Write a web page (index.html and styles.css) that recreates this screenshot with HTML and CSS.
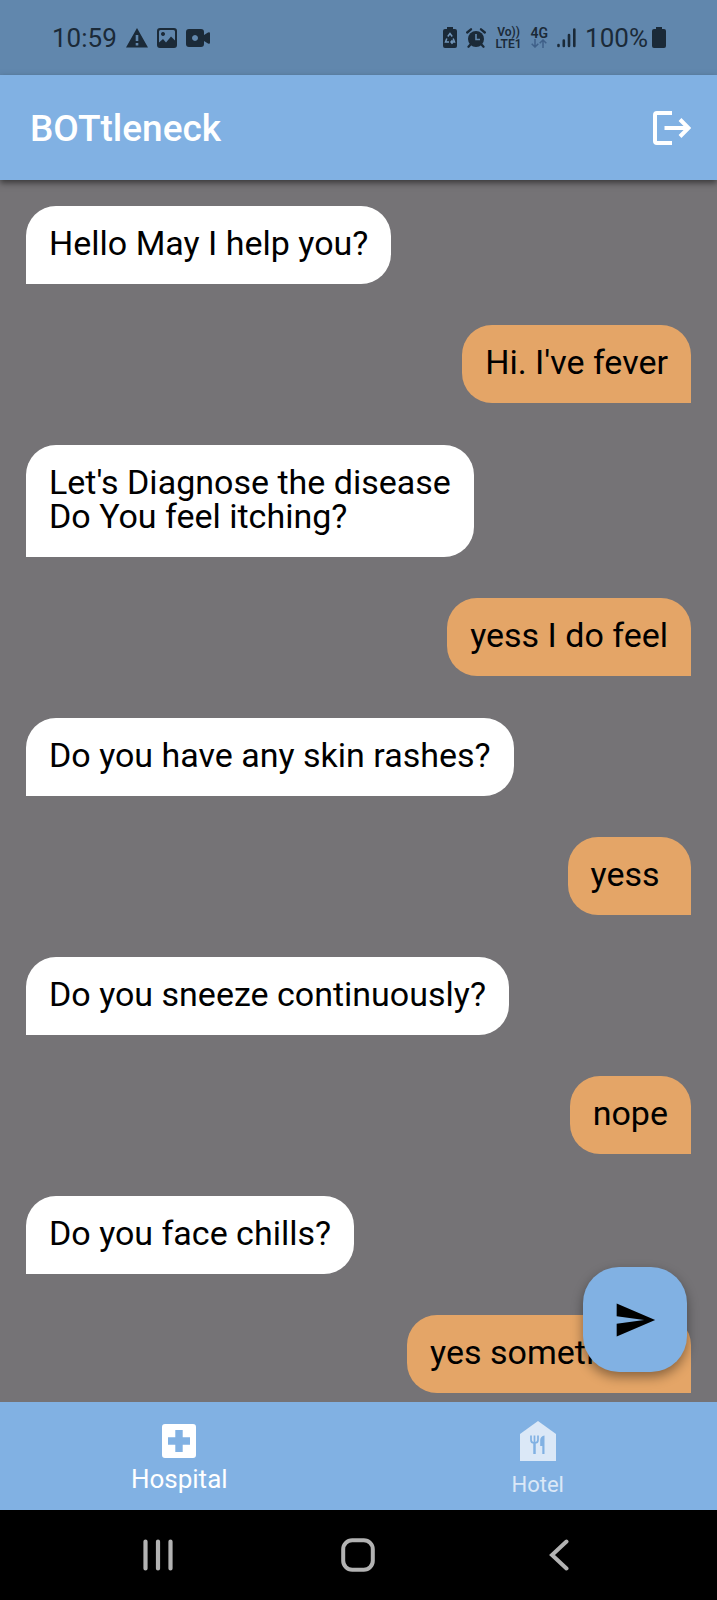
FILE: index.html
```html
<!DOCTYPE html>
<html lang="en">
<head>
<meta charset="utf-8">
<meta name="viewport" content="width=device-width, initial-scale=1">
<title>BOTtleneck</title>
<link rel="stylesheet" href="styles.css">
</head>
<body>
<div class="app">
  <div class="status">
    <div class="status-group status-left">
      <span class="clock">10:59</span>
      <svg width="22" height="20" viewBox="0 0 22 20"><path fill="currentColor" fill-rule="evenodd" d="M11 0 22 19.500H0ZM9.700 7v6h2.600V7Zm0 8v2.500h2.600V15Z"/></svg>
      <svg width="20" height="20" viewBox="0 0 20 20"><path fill="currentColor" fill-rule="evenodd" d="M3 0H17a3 3 0 0 1 3 3V17a3 3 0 0 1-3 3H3a3 3 0 0 1-3-3V3a3 3 0 0 1 3-3ZM2 14.500 6 11l3 3.500 5-6 4 4V3.500Q18 2 16.500 2H3.500Q2 2 2 3.500ZM6 4a2 2 0 1 0 .01 0Z"/></svg>
      <svg width="24" height="20" viewBox="0 0 24 20"><path fill="currentColor" fill-rule="evenodd" d="M3 1H15a3 3 0 0 1 3 3V7L22 4.500Q24 3.500 24 5.500V14.500Q24 16.500 22 15.500L18 13V16a3 3 0 0 1-3 3H3a3 3 0 0 1-3-3V4a3 3 0 0 1 3-3ZM9 7a3 3 0 1 0 .01 0Z"/></svg>
    </div>
    <div class="status-group status-right">
      <svg width="14" height="21" viewBox="0 0 14 21"><path fill="currentColor" d="M4 0H10V2H12a2 2 0 0 1 2 2V19a2 2 0 0 1-2 2H2a2 2 0 0 1-2-2V4a2 2 0 0 1 2-2H4Z"/><path fill="none" stroke="#7296ba" stroke-width="1.500" d="M4.800 9.500 7 6.500 9.200 9.500M3.800 11.500 2.500 15H6M8 15H11.500L10.200 11.500M9.500 13.200 8 15 9.500 16.800"/></svg>
      <svg width="20" height="20" viewBox="0 0 20 20"><circle cx="10" cy="11" r="8" fill="currentColor"/><path fill="none" stroke="currentColor" stroke-width="2.300" stroke-linecap="round" d="M1.200 4.500 5 1.300M18.800 4.500 15 1.300M4.500 16.500 2.500 18.700M15.500 16.500 17.500 18.700"/><path fill="none" stroke="#6187ad" stroke-width="1.600" d="M10 6V11.500H14"/></svg>
      <span class="volte"><span>Vo))</span><span>LTE1</span></span>
      <span class="net"><span>4G</span><svg width="16" height="9" viewBox="0 0 16 9"><path fill="none" stroke="#3f6089" stroke-width="1.500" d="M4 0V8M.7 4.700 4 8 7.300 4.700M12 9V1M8.700 4.300 12 1 15.300 4.300"/></svg></span>
      <svg width="19" height="20" viewBox="0 0 19 20"><path fill="none" stroke="currentColor" stroke-width="2.600" stroke-linecap="round" d="M1.500 17V18M6.800 12.500V18M12 7V18M17.300 1.500V18"/></svg>
      <span class="charge"><span>100%</span>
      <svg width="14" height="21" viewBox="0 0 14 21"><path fill="currentColor" d="M4 0H10V2H12a2 2 0 0 1 2 2V19a2 2 0 0 1-2 2H2a2 2 0 0 1-2-2V4a2 2 0 0 1 2-2H4Z"/></svg></span>
    </div>
  </div>

  <header class="appbar">
    <h1 class="title">BOTtleneck</h1>
    <button class="logout" type="button" aria-label="Log out">
      <svg width="38" height="34" viewBox="0 0 38 34"><path fill="none" stroke="#fff" stroke-width="4" stroke-linejoin="round" d="M19 2H4Q2 2 2 4V30Q2 32 4 32H19"/><path fill="none" stroke="#fff" stroke-width="4" d="M11.500 17H35M27 8.500 35.500 17 27 25.500"/></svg>
    </button>
  </header>

  <main class="chat">
    <ul class="messages">
      <li class="msg bot">Hello May I help you?</li>
      <li class="msg user">Hi. I've fever</li>
      <li class="msg bot">Let's Diagnose the disease
Do You feel itching?</li>
      <li class="msg user">yess I do feel</li>
      <li class="msg bot">Do you have any skin rashes?</li>
      <li class="msg user">yess </li>
      <li class="msg bot">Do you sneeze continuously?</li>
      <li class="msg user">nope</li>
      <li class="msg bot">Do you face chills?</li>
      <li class="msg user">yes sometimes </li>
    </ul>
    <button class="send" type="button" aria-label="Send">
      <svg width="44" height="44" viewBox="0 0 24 24"><path d="M2.010 21 23 12 2.010 3 2 10l15 2-15 2z"/></svg>
    </button>
  </main>

  <nav class="tabs">
    <a class="tab active" href="#hospital">
      <svg width="34" height="34" viewBox="0 0 34 34"><path fill="currentColor" fill-rule="evenodd" d="M3 0H31a3 3 0 0 1 3 3V31a3 3 0 0 1-3 3H3a3 3 0 0 1-3-3V3a3 3 0 0 1 3-3ZM13.300 6V13.300H6V20.700H13.300V28H20.700V20.700H28V13.300H20.700V6Z"/></svg>
      <span>Hospital</span>
    </a>
    <a class="tab" href="#hotel">
      <svg width="36" height="40" viewBox="0 0 36 40"><path fill="currentColor" d="M18 0 36 13V40H0V13Z"/><path fill="none" stroke="#81b1e3" stroke-width="1.700" d="M11 14.500V19Q11 22 14.500 22T18 19V14.500M14.500 14.500V33"/><path fill="none" stroke="#81b1e3" stroke-width="2.200" d="M14.500 21V33"/><path fill="#81b1e3" d="M24.500 14.500V33H22.300V25H20.200V19Q20.500 15 24.500 14.500Z"/></svg>
      <span>Hotel</span>
    </a>
  </nav>

  <div class="sysnav">
    <button type="button" aria-label="Recent apps"><svg width="30" height="32" viewBox="0 0 30 32"><path fill="none" stroke="currentColor" stroke-width="4.200" stroke-linecap="round" d="M2.500 2.500V29.500M15 2.500V29.500M27.500 2.500V29.500"/></svg></button>
    <button type="button" aria-label="Home"><svg width="34" height="34" viewBox="0 0 34 34"><rect x="2.200" y="2.200" width="29.600" height="29.600" rx="9" fill="none" stroke="currentColor" stroke-width="4"/></svg></button>
    <button type="button" aria-label="Back"><svg width="20" height="32" viewBox="0 0 20 32"><path fill="none" stroke="currentColor" stroke-width="4" stroke-linecap="round" d="M17.500 2.500 3 16 17.500 29.500"/></svg></button>
  </div>
</div>
</body>
</html>
```
FILE: styles.css
```css
* {
  box-sizing: border-box;
}

body {
  margin: 0;
  font-family: Roboto, "Liberation Sans", sans-serif;
  background: #000;
}

button {
  padding: 0;
  border: 0;
  background: none;
  color: inherit;
  cursor: pointer;
}

svg {
  display: block;
  flex: none;
}

.app {
  display: flex;
  flex-direction: column;
  min-height: 100vh;
}

.status {
  display: flex;
  justify-content: space-between;
  align-items: center;
  height: 75px;
  padding: 0 51px 0 52px;
  background: #6187ad;
  color: #1b2a38;
  font-size: 26px;
  line-height: 30px;
}

.status-group {
  display: flex;
  align-items: center;
  gap: 9px;
}

.volte,
.net {
  display: flex;
  flex-direction: column;
  align-items: center;
  font-size: 12px;
  font-weight: 600;
  line-height: 12px;
}

.net {
  font-size: 14px;
}

.charge {
  display: flex;
  align-items: center;
  gap: 4px;
}

.appbar {
  position: relative;
  z-index: 1;
  display: flex;
  justify-content: space-between;
  align-items: center;
  height: 105px;
  padding: 0 26px 0 30px;
  background: #81b1e3;
  color: #fff;
  box-shadow: 0 3px 6px rgba(0, 0, 0, 0.5);
}

.title {
  margin: 0;
  padding-top: 2px;
  font-size: 37px;
  font-weight: 500;
  line-height: 44px;
}

.chat {
  position: relative;
  flex: 1;
  padding: 26px 26px 8px;
  background: #757376;
}

.messages {
  display: flex;
  flex-direction: column;
  gap: 41px;
  margin: 0;
  padding: 0;
  list-style: none;
}

.msg {
  max-width: 100%;
  padding: 20px 23px 24px;
  color: #000;
  font-size: 34px;
  line-height: 34px;
  white-space: pre-wrap;
}

.bot {
  align-self: flex-start;
  border-radius: 30px 30px 30px 0;
  background: #fff;
}

.user {
  align-self: flex-end;
  margin-bottom: 1px;
  border-radius: 30px 30px 0 30px;
  background: #e4a567;
  white-space: break-spaces;
}

.send {
  position: absolute;
  right: 30px;
  bottom: 30px;
  display: grid;
  place-items: center;
  width: 104px;
  height: 105px;
  border-radius: 36px;
  background: #81b1e3;
  box-shadow: 0 5px 12px rgba(0, 0, 0, 0.4);
}

.tabs {
  display: grid;
  grid-template-columns: 1fr 1fr;
  height: 108px;
  background: #81b1e3;
}

.tab {
  display: flex;
  flex-direction: column;
  align-items: center;
  gap: 14px;
  padding-top: 19px;
  color: #dbe8f7;
  font-size: 22px;
  line-height: 20px;
  text-decoration: none;
}

.tab.active {
  gap: 6px;
  padding-top: 22px;
  color: #fff;
  font-size: 26px;
  line-height: 30px;
}

.sysnav {
  display: grid;
  grid-template-columns: repeat(3, 1fr);
  height: 90px;
  padding: 0 8%;
  background: #000;
  color: #b3b3b3;
}

.sysnav button {
  display: grid;
  place-items: center;
}
```
